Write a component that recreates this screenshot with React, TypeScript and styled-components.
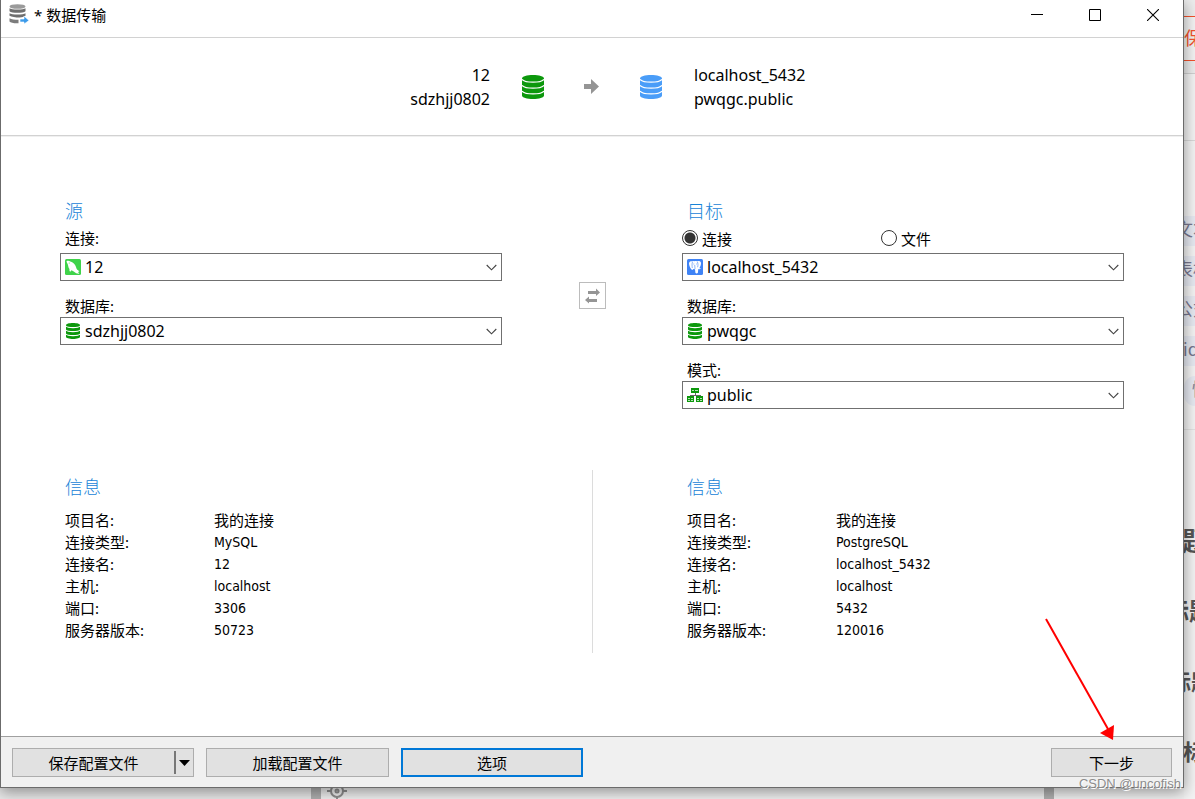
import React from "react";
import styled, { createGlobalStyle } from "styled-components";

const sans = '"Noto Sans", "Noto Sans CJK SC", sans-serif';
const condensed = '"DejaVu Sans Condensed", "Noto Sans", "Noto Sans CJK SC", sans-serif';

const GlobalStyle = createGlobalStyle`
  * { box-sizing: border-box; }
  body { margin: 0; background: #f0f0f0; color: #000; font-family: ${sans}; font-size: 15px; }
  button, select, input { font: inherit; color: inherit; margin: 0; }
  h2, p, dl, dt, dd { margin: 0; font-weight: 400; }
  svg { display: block; flex: none; }
`;

/* Desktop behind the dialog */

const Desktop = styled.div`
  display: grid;
  grid-template-columns: minmax(0, 1fr) 11px;
  grid-template-rows: 1fr 11px;
  min-height: 100vh;
  overflow: hidden;
`;

const SideStrip = styled.div`
  grid-column: 2;
  grid-row: 1 / 3;
  display: flex;
  flex-direction: column;
  min-width: 0;
  height: 100vh;
  overflow: hidden;
  white-space: nowrap;
  background: #f3f3f3;
`;

const StripBar = styled.div`
  flex: none;
  height: 74px;
  padding-top: 13px;
  background: #ececec;
  border-bottom: 1px solid #d0d0d0;
`;

const StripEdge = styled.div`
  flex: none;
  height: 3px;
  background: #f0f0f0;
  border-bottom: 1px solid #c4c4c4;
  margin-bottom: -3px;
`;

const StripAction = styled.div`
  height: 45px;
  margin-top: 3px;
  border: solid #f4512c;
  border-width: 1px 0;
  background: #f3f3f3;
  color: #f4512c;
  font-size: 18px;
  line-height: 43px;
`;

const StripGap = styled.div`
  flex: none;
  height: 67px;
  border-bottom: 1px solid #d8d8d8;
`;

const StripTags = styled.div`
  flex: none;
  display: flex;
  flex-direction: column;
  gap: 10px;
  padding: 75px 0 23px;
  border-bottom: 1px solid #e2e2e2;
`;

const StripTag = styled.span<{ $round?: boolean; $indent: number }>`
  height: 30px;
  background: #e6e9f1;
  border-radius: ${(p) => (p.$round ? "15px 0 0 15px" : "0")};
  color: #77778f;
  font-size: 18px;
  line-height: 26px;
  text-indent: ${(p) => p.$indent}px;
`;

const StripHeadings = styled.div`
  padding-top: 76px;
  color: #555;
  font-weight: 700;
  line-height: 70px;
`;

const StripHeading = styled.div<{ $size: number; $indent: number }>`
  height: 70px;
  font-size: ${(p) => p.$size}px;
  text-indent: ${(p) => p.$indent}px;
`;

const BottomStrip = styled.div`
  grid-column: 1;
  grid-row: 2;
  display: grid;
  grid-template-columns: 311px 10px 1fr 10px 130px;
  overflow: hidden;
  background: #f1f1f1;
`;

const StripBlock = styled.div<{ $color: string }>`
  background: ${(p) => p.$color};
`;

const StripTool = styled.div`
  display: flex;
  align-items: center;
  padding: 0 6px;
  height: 6px;
`;

/* Dialog */

const Dialog = styled.main`
  grid-column: 1;
  grid-row: 1;
  position: relative;
  z-index: 1;
  display: flex;
  flex-direction: column;
  background: #fff;
  border: solid #6b6b6b;
  border-width: 0 1px 1px;
  box-shadow: 0 4px 14px rgba(0, 0, 0, 0.4);
`;

const TitleBar = styled.header`
  display: flex;
  justify-content: space-between;
  height: 38px;
  border-bottom: 1px solid #d2d2d2;
`;

const Title = styled.div`
  display: flex;
  align-items: center;
  gap: 5px;
  height: 28px;
  padding-left: 8px;
`;

const WindowControls = styled.div`
  display: flex;
  padding-right: 1px;
`;

const WindowButton = styled.button`
  display: flex;
  align-items: center;
  justify-content: center;
  width: 58px;
  height: 30px;
  padding: 0;
  border: 0;
  background: none;
`;

const Summary = styled.section`
  display: grid;
  grid-template-columns: 1fr 140px 1fr;
  column-gap: 32px;
  align-items: center;
  height: 98px;
  border-bottom: 1px solid #d2d2d2;
`;

const SummaryText = styled.div<{ $end?: boolean }>`
  font-size: 16px;
  line-height: 24px;
  text-align: ${(p) => (p.$end ? "right" : "left")};
`;

const SummaryFlow = styled.div`
  display: flex;
  align-items: center;
  justify-content: space-between;
`;

const Content = styled.div`
  flex: 1;
  padding: 62px 59px 24px;
  border-top: 1px solid #f0f0f0;
`;

const Columns = styled.div`
  display: grid;
  grid-template-columns: 1fr 180px 1fr;
`;

const InfoColumns = styled(Columns)`
  margin-top: 61px;
`;

const SectionTitle = styled.h2`
  padding-left: 5px;
  color: #1883d7;
  font-size: 18px;
  font-weight: 300;
  line-height: 24px;
`;

const FieldHead = styled.div`
  display: grid;
  grid-template-columns: 199px 1fr;
  align-items: center;
  height: 30px;
`;

const Label = styled.label`
  display: block;
  padding-left: 5px;
  line-height: 22px;
`;

const SpacedLabel = styled(Label)`
  margin-top: 14px;
`;

const RadioLabel = styled.label`
  display: flex;
  align-items: center;
  gap: 4px;
`;

const Radio = styled.input`
  appearance: none;
  width: 16px;
  height: 16px;
  border: 1px solid #333;
  border-radius: 50%;
  background: #fff;
  &:checked {
    background: radial-gradient(circle, #333 5px, #fff 6px);
  }
`;

const Combo = styled.div`
  display: grid;
  grid-template-columns: 1fr;
  align-items: center;
  height: 28px;
  > * { grid-area: 1 / 1; }
  > svg { z-index: 1; pointer-events: none; margin: 0 5px; }
  > svg:last-child { justify-self: end; }
`;

const Select = styled.select`
  appearance: none;
  width: 100%;
  height: 28px;
  padding: 0 28px 0 24px;
  border: 1px solid #707070;
  border-radius: 0;
  background: #fff;
  font-size: 16px;
  line-height: 24px;
`;

const SwapCell = styled.div`
  display: flex;
  justify-content: center;
  align-items: flex-start;
  padding-top: 83px;
`;

const SwapButton = styled.button`
  display: flex;
  align-items: center;
  justify-content: center;
  width: 27px;
  height: 27px;
  padding: 0;
  border: 1px solid #bcbcbc;
  background: #fff;
`;

const Divider = styled.div`
  justify-self: center;
  width: 1px;
  background: #dcdcdc;
`;

const InfoPanel = styled.section`
  padding: 5px 0 12px;
`;

const InfoList = styled.dl`
  display: grid;
  grid-template-columns: 149px 1fr;
  grid-auto-rows: 22px;
  padding: 10px 0 0 5px;
  line-height: 22px;
`;

const InfoValue = styled.dd<{ $native?: boolean }>`
  font-family: ${(p) => (p.$native ? sans : condensed)};
  font-size: ${(p) => (p.$native ? 15 : 14)}px;
`;

const Footer = styled.footer`
  display: flex;
  gap: 12px;
  padding: 11px 11px 10px;
  border-top: 1px solid #a0a0a0;
  background: #f0f0f0;
`;

const PushButton = styled.button<{ $primary?: boolean; $width: number }>`
  width: ${(p) => p.$width}px;
  height: 29px;
  padding: 0;
  border: ${(p) => (p.$primary ? "2px solid #0078d7" : "1px solid #adadad")};
  background: #e1e1e1;
  line-height: 24px;
`;

const NextButton = styled(PushButton)`
  margin-left: auto;
`;

const SplitButton = styled.div`
  display: flex;
  align-items: center;
  width: 182px;
  height: 29px;
  border: 1px solid #adadad;
  background: #e1e1e1;
`;

const SplitMain = styled.button`
  flex: 1;
  padding: 0;
  border: 0;
  background: none;
  line-height: 24px;
`;

const SplitMenu = styled.button`
  display: flex;
  align-items: center;
  justify-content: center;
  width: 19px;
  height: 23px;
  padding: 0;
  border: 0;
  border-left: 2px solid #777;
  background: none;
`;

const Pointer = styled.svg`
  position: absolute;
  right: 64px;
  bottom: 45px;
  pointer-events: none;
`;

const Watermark = styled.span`
  position: absolute;
  right: 2px;
  bottom: -5px;
  color: #8c8c8c;
  font-family: "Liberation Sans", sans-serif;
  font-size: 13px;
  line-height: 16px;
  text-shadow: 1px 1px 0 #fff;
`;

/* Drawings */

const DatabaseIcon = ({ color }: { color: string }) => (
  <svg width="22" height="24" viewBox="0 0 22 24" aria-hidden="true">
    <path d="M0 3.500C0 1.400 5 0 11 0s11 1.400 11 3.500v17c0 2.100-5 3.500-11 3.500S0 22.600 0 20.500z" fill={color} />
    <g fill="none" stroke="#fff" strokeWidth="1.200">
      <path d="M0 4.300C1.500 6.300 6 7.100 11 7.100s9.500-.8 11-2.800" />
      <path d="M0 10.300C1.500 12.300 6 13.100 11 13.100s9.500-.8 11-2.800" />
      <path d="M0 16C1.500 18 6 18.800 11 18.800s9.500-.8 11-2.800" />
    </g>
  </svg>
);

const SmallDatabaseIcon = () => (
  <svg width="16" height="16" viewBox="0 0 16 16" aria-hidden="true">
    <path d="M1 2.200C1 .9 4 0 8 0s7 .9 7 2.200v11.600c0 1.300-3 2.200-7 2.200s-7-.9-7-2.200z" fill="#0c980c" />
    <g fill="none" stroke="#fff" strokeWidth="1.200">
      <path d="M1 3c1 1.300 4 1.700 7 1.700S14 4.300 15 3" />
      <path d="M1 7c1 1.300 4 1.700 7 1.700S14 8.300 15 7" />
      <path d="M1 11c1 1.300 4 1.700 7 1.700s6-.4 7-1.700" />
    </g>
  </svg>
);

const MySqlIcon = () => (
  <svg width="16" height="16" viewBox="0 0 16 16" aria-hidden="true">
    <rect width="16" height="16" rx="1.500" fill="#3fd34a" />
    <path d="M1.500 2.300c1.200-.8 2.600-.6 3.800.2 1.900.4 3.700 1.700 4.600 3.300.9 1.300 1.200 2.800 1.700 4 .5 1 1.400 1.500 2.800 2.600-.9.100-1.300.3-1.500.6.500.6 1 1 1.500 1.700-2 .2-3.900-.5-5.300-1.900-1-.9-1.800-1.100-2.600-1.600l-1.200 1.600c-.9-.6-1-1.700-.8-2.900C3.300 8.600 3.300 7 2.900 5.700 2.600 4.500 1.600 3.500 1.500 2.300z" fill="#fff" />
    <circle cx="4.200" cy="4" r=".5" fill="#3fd34a" />
  </svg>
);

const PostgresIcon = () => (
  <svg width="16" height="16" viewBox="0 0 16 16" aria-hidden="true">
    <rect width="16" height="16" rx="1.500" fill="#3f83f5" />
    <path d="M2 4.200C2.200 2.500 3.500 1.900 5.200 2.200c.6-.2 1.300-.3 2 0 1-.4 2-.4 2.900 0 2-.5 3.700.1 3.900 1.700.1 1.700-.7 3.700-1.700 5.300.6.200 1.200.1 1.700 0-.5.9-1.500 1.100-2.600.9-.4 1.200-.2 2.600-.5 3.600-.6.9-2 .9-2.500.1-.3-1.200-.1-2.700-.4-3.900-.5.3-1 .4-1.500.2-.6.9-1.400 1.100-2 .4C3.100 9 2 6.300 2 4.200z" fill="#fff" />
    <path d="M5.600 2.700C4.800 4.600 5 6.900 5.300 9M10.300 2.700c.8 1.700.9 3.700.3 5.500" fill="none" stroke="#3f83f5" strokeWidth=".6" />
    <path d="M7.700 6c.1 1.400.3 2.500.3 4M6.300 5h1M9 5h.8" fill="none" stroke="#3f83f5" strokeWidth=".6" />
  </svg>
);

const SchemaIcon = () => (
  <svg width="16" height="16" viewBox="0 0 16 16" shapeRendering="crispEdges" aria-hidden="true">
    <path d="M8 6v2M3 10V8h10v2" fill="none" stroke="#666" />
    <path d="M4 1h8v5H4zM0 9h7v6H0zM9 9h7v6H9z" fill="#0c980c" />
    <path d="M5 3h2v1H5zM8 3h3v1H8zM1 11h2v1H1zM4 11h2v1H4zM1 13h2v1H1zM4 13h2v1H4zM10 11h2v1h-2zM13 11h2v1h-2zM10 13h2v1h-2zM13 13h2v1h-2z" fill="#b4e2b4" />
  </svg>
);

const TransferIcon = () => (
  <svg width="20" height="20" viewBox="0 0 20 20" aria-hidden="true">
    <ellipse cx="8.500" cy="2.500" rx="8" ry="2.300" fill="#9a9a9a" />
    <path d="M.5 4.200c2 1.700 14 1.700 16 0v3c-2 2-14 2-16 0zM.5 9.200c2 1.700 14 1.700 16 0v2.500c-2 1-3 1.700-6 1.700-4 0-8-.3-10-1.700z" fill="#6f6f6f" />
    <path d="M.5 14.200c2 1.200 5 1.500 9 1.500v3.500c-4 .2-8-.3-9-1.700z" fill="#7c7c7c" />
    <path d="M11 15h4v-3l5 4.500-5 3.500v-2h-4z" fill="#3b9bea" stroke="#fff" strokeWidth=".6" />
  </svg>
);

const ArrowIcon = () => (
  <svg width="16" height="16" viewBox="0 0 16 16" aria-hidden="true">
    <path d="M0 5h7V0l8 7.500L7 15v-5H0z" fill="#959595" />
  </svg>
);

const SwapIcon = () => (
  <svg width="15" height="16" viewBox="0 0 15 16" aria-hidden="true">
    <path d="M3 3h8V.500L15 4.500 11 8V6H3zM12 11H4V8.500L0 12l4 3.500V14h8z" fill="#959595" />
  </svg>
);

const Chevron = () => (
  <svg width="11" height="7" viewBox="0 0 11 7" aria-hidden="true">
    <path d="M.7 1l4.800 4.800L10.300 1" fill="none" stroke="#444" strokeWidth="1.100" />
  </svg>
);

type ComboFieldProps = { id: string; icon: React.ReactNode; value: string };

const ComboField = ({ id, icon, value }: ComboFieldProps) => (
  <Combo>
    {icon}
    <Select id={id} defaultValue={value}>
      <option>{value}</option>
    </Select>
    <Chevron />
  </Combo>
);

const infoLabels = ["项目名:", "连接类型:", "连接名:", "主机:", "端口:", "服务器版本:"];
const sourceInfo = ["我的连接", "MySQL", "12", "localhost", "3306", "50723"];
const targetInfo = ["我的连接", "PostgreSQL", "localhost_5432", "localhost", "5432", "120016"];

const Info = ({ values }: { values: string[] }) => (
  <InfoPanel>
    <SectionTitle>信息</SectionTitle>
    <InfoList>
      {infoLabels.map((label, i) => (
        <React.Fragment key={label}>
          <dt>{label}</dt>
          <InfoValue $native={i === 0}>{values[i]}</InfoValue>
        </React.Fragment>
      ))}
    </InfoList>
  </InfoPanel>
);

export default function App() {
  return (
    <Desktop>
      <GlobalStyle />
      <Dialog>
        <TitleBar>
          <Title>
            <TransferIcon />
            <span>* 数据传输</span>
          </Title>
          <WindowControls>
            <WindowButton aria-label="最小化">
              <svg width="12" height="12" viewBox="0 0 12 12"><path d="M0 5.500h12" stroke="#000" /></svg>
            </WindowButton>
            <WindowButton aria-label="最大化">
              <svg width="12" height="12" viewBox="0 0 12 12"><path d="M.5.500h11v11H.500z" fill="none" stroke="#000" /></svg>
            </WindowButton>
            <WindowButton aria-label="关闭">
              <svg width="12" height="12" viewBox="0 0 12 12"><path d="M0 0l12 12M12 0L0 12" stroke="#000" strokeWidth="1.100" /></svg>
            </WindowButton>
          </WindowControls>
        </TitleBar>

        <Summary>
          <SummaryText $end>
            <p>12</p>
            <p>sdzhjj0802</p>
          </SummaryText>
          <SummaryFlow>
            <DatabaseIcon color="#0c980c" />
            <ArrowIcon />
            <DatabaseIcon color="#4a9df8" />
          </SummaryFlow>
          <SummaryText>
            <p>localhost_5432</p>
            <p>pwqgc.public</p>
          </SummaryText>
        </Summary>

        <Content>
          <Columns>
            <section>
              <SectionTitle>源</SectionTitle>
              <FieldHead>
                <Label htmlFor="source-connection">连接:</Label>
              </FieldHead>
              <ComboField id="source-connection" icon={<MySqlIcon />} value="12" />
              <SpacedLabel htmlFor="source-database">数据库:</SpacedLabel>
              <ComboField id="source-database" icon={<SmallDatabaseIcon />} value="sdzhjj0802" />
            </section>
            <SwapCell>
              <SwapButton aria-label="交换"><SwapIcon /></SwapButton>
            </SwapCell>
            <section>
              <SectionTitle>目标</SectionTitle>
              <FieldHead>
                <RadioLabel>
                  <Radio type="radio" name="target" defaultChecked />
                  连接
                </RadioLabel>
                <RadioLabel>
                  <Radio type="radio" name="target" />
                  文件
                </RadioLabel>
              </FieldHead>
              <Combo>
                <PostgresIcon />
                <Select aria-label="目标连接" defaultValue="localhost_5432">
                  <option>localhost_5432</option>
                </Select>
                <Chevron />
              </Combo>
              <SpacedLabel htmlFor="target-database">数据库:</SpacedLabel>
              <ComboField id="target-database" icon={<SmallDatabaseIcon />} value="pwqgc" />
              <SpacedLabel htmlFor="target-schema">模式:</SpacedLabel>
              <ComboField id="target-schema" icon={<SchemaIcon />} value="public" />
            </section>
          </Columns>

          <InfoColumns>
            <Info values={sourceInfo} />
            <Divider />
            <Info values={targetInfo} />
          </InfoColumns>
        </Content>

        <Footer>
          <SplitButton>
            <SplitMain>保存配置文件</SplitMain>
            <SplitMenu aria-label="更多">
              <svg width="11" height="6" viewBox="0 0 11 6"><path d="M0 0h11L5.500 6z" /></svg>
            </SplitMenu>
          </SplitButton>
          <PushButton $width={183}>加载配置文件</PushButton>
          <PushButton $width={182} $primary>选项</PushButton>
          <NextButton $width={121}>下一步</NextButton>
        </Footer>

        <Pointer width="74" height="124" viewBox="0 0 74 124" aria-hidden="true">
          <path d="M1 1l62 110" stroke="#f00" strokeWidth="2" />
          <path d="M68 122l-13-7 14-8z" fill="#f00" />
        </Pointer>
        <Watermark>CSDN @uncofish</Watermark>
      </Dialog>

      <SideStrip aria-hidden="true">
        <StripEdge />
        <StripBar>
          <StripAction>保</StripAction>
        </StripBar>
        <StripGap />
        <StripTags>
          <StripTag $indent={-9}>文本</StripTag>
          <StripTag $indent={-9}>表格</StripTag>
          <StripTag $indent={-9}>公式</StripTag>
          <StripTag $indent={-1}>id</StripTag>
          <StripTag $indent={8} $round>情</StripTag>
        </StripTags>
        <StripHeadings>
          <StripHeading $size={26} $indent={-28}>标题</StripHeading>
          <StripHeading $size={24} $indent={-19}>标题</StripHeading>
          <StripHeading $size={22} $indent={-15}>标题</StripHeading>
          <StripHeading $size={22} $indent={-1}>标题</StripHeading>
        </StripHeadings>
      </SideStrip>
      <BottomStrip aria-hidden="true">
        <StripBlock $color="#e9e9e9" />
        <StripBlock $color="#b0b0b0" />
        <StripTool>
          <svg width="20" height="20" viewBox="0 0 20 20" fill="none" stroke="#8f8f8f" strokeWidth="2">
            <circle cx="10" cy="10" r="6" />
            <circle cx="10" cy="10" r="1.500" />
            <path d="M10 0v5M10 15v5M0 10h5M15 10h5" />
          </svg>
        </StripTool>
        <StripBlock $color="#b0b0b0" />
        <StripBlock $color="#f1f1f1" />
      </BottomStrip>
    </Desktop>
  );
}
